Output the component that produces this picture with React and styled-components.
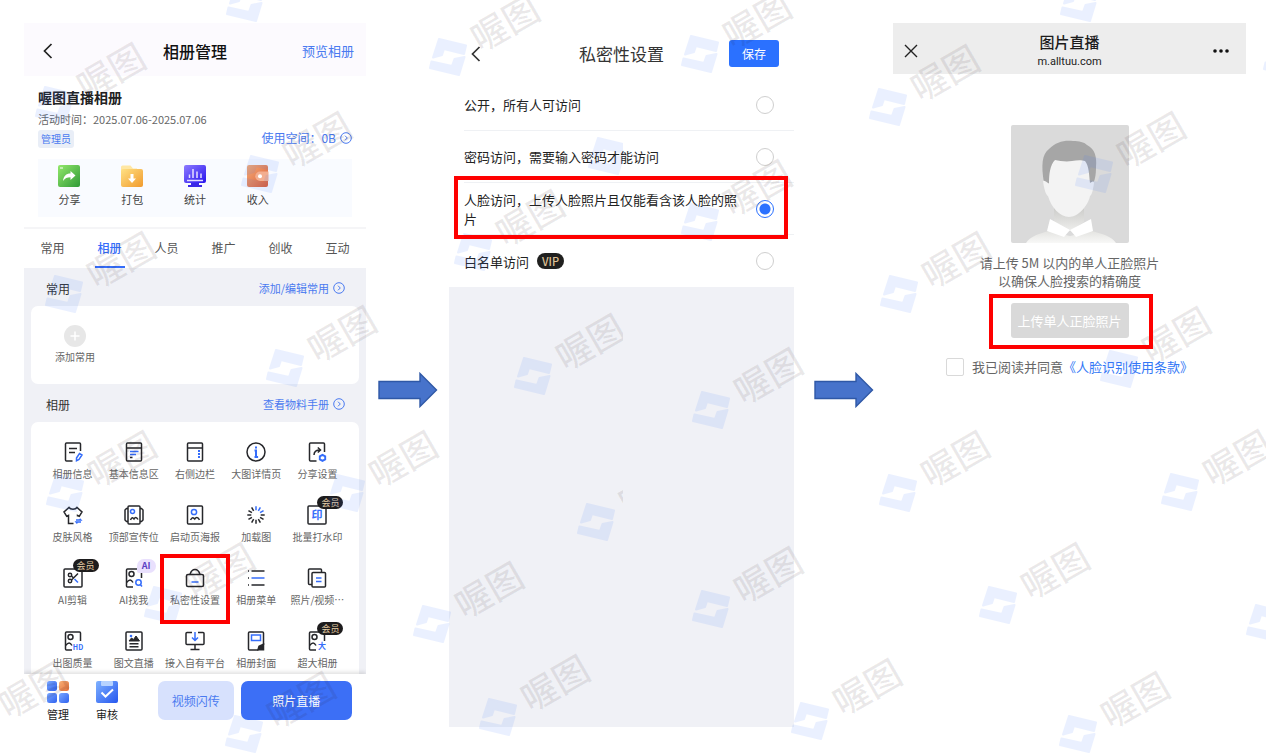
import React, { useState } from "react";
import styled, { createGlobalStyle, css } from "styled-components";

const GlobalStyle = createGlobalStyle`
  * {
    box-sizing: border-box;
  }
  body {
    margin: 0;
    background: #fff;
    color: #222;
    font-family: "Noto Sans CJK SC", "Noto Sans", sans-serif;
    overflow-x: hidden;
  }
  button {
    padding: 0;
    border: 0;
    background: none;
    font: inherit;
    color: inherit;
    cursor: pointer;
  }
  a {
    color: inherit;
    text-decoration: none;
  }
  h1, h2, h3, p {
    margin: 0;
    font-weight: 400;
  }
  svg {
    display: block;
  }
`;

const DARK = "#26272b";
const BLUE = "#356dfa";

/* ---------- icons of the album grid, 24 x 24 ---------- */

const IconLetters = styled.text`
  fill: ${BLUE};
  stroke: none;
  font-size: ${(props) => props.$size || 11}px;
  font-weight: 700;
  text-anchor: middle;
`;

const Picture = () => (
  <>
    <path d="M11 21H5.5a1 1 0 0 1-1-1V4a1 1 0 0 1 1-1h13a1 1 0 0 1 1 1v8" />
    <circle cx="9.5" cy="8" r="2.5" />
    <path d="M4.5 16.5c3-3.5 4.5-3.5 6.5 0" />
  </>
);

const gridIcons = {
  info: (
    <>
      <path d="M11.5 21h-6a1 1 0 0 1-1-1V4a1 1 0 0 1 1-1h13a1 1 0 0 1 1 1v7" />
      <path d="M8 8.5h8M8 12.5h6" />
      <path stroke={BLUE} d="M15.5 18l3-4.5L21 15l-3 4.5-2.5 1.2z" />
    </>
  ),
  basic: (
    <>
      <rect x="4.5" y="3" width="15" height="18" rx="1" />
      <path d="M4.5 8h15M8 17.5h2.5" />
      <path stroke={BLUE} d="M8 11.5h8.5M8 14.5h6" />
    </>
  ),
  sidebar: (
    <>
      <rect x="4.5" y="3" width="15" height="18" rx="1" />
      <path d="M4.5 8h15" />
      <path stroke={BLUE} strokeWidth="2" d="M15 11h2M15 14h2M15 17h2" />
    </>
  ),
  detail: (
    <>
      <circle cx="12" cy="12" r="9" />
      <path stroke={BLUE} strokeWidth="2" d="M10.5 10.5H12v6M10.5 17h3.6M11 7.5h2" />
    </>
  ),
  share: (
    <>
      <path d="M11.5 21h-6a1 1 0 0 1-1-1V4a1 1 0 0 1 1-1h13a1 1 0 0 1 1 1v8" />
      <path d="M9 15c0-3 1.5-5 6-5M12.8 7.5l2.7 2.5-2.7 2.5" />
      <path stroke={BLUE} strokeWidth="1.9" d="M17.5 14.8l2.7 1.5v3.1l-2.7 1.5-2.7-1.5v-3.1z" />
    </>
  ),
  skin: (
    <>
      <path d="M12.5 20.5h-5v-8l-1.8.8L3 9l5-4.5c1.5 2.3 6.5 2.3 8 0L21 9l-2.7 4.3-1.8-.8v1" />
      <path stroke={BLUE} strokeWidth="1.3" d="M15 17h5l-1.3-1.3M20 19h-5l1.3 1.5" />
    </>
  ),
  banner: (
    <>
      <rect x="6" y="3" width="12" height="18" rx="1" />
      <path d="M6 5.5H4.5L3 7v10l1.5 1.5H6M18 5.5h1.5L21 7v10l-1.5 1.5H18" />
      <circle stroke={BLUE} cx="10.5" cy="8.5" r="2" />
      <path d="M8.5 17c1.5-3.5 2.5-2 3.5-1 1-2 2.5-2.5 4 .5" />
    </>
  ),
  poster: (
    <>
      <rect x="4.5" y="3" width="15" height="18" rx="1" />
      <circle stroke={BLUE} cx="11" cy="9" r="2.6" />
      <path d="M7.5 17c2-3.5 3-2 4.2-1 1.2-2 3-2.5 4.8.8" />
    </>
  ),
  loading: (
    <>
      {[...Array(12)].map((_, i) => (
        <path
          key={i}
          stroke={i < 3 ? BLUE : DARK}
          transform={`rotate(${i * 30} 12 12)`}
          d="M12 3.3v4"
        />
      ))}
    </>
  ),
  watermark: (
    <>
      <rect x="3" y="3" width="18" height="18" rx="1" />
      <IconLetters x="12" y="16">印</IconLetters>
    </>
  ),
  clip: (
    <>
      <rect x="3" y="3" width="18" height="18" rx="1" />
      <circle cx="9" cy="9" r="1.7" />
      <circle cx="9" cy="15" r="1.7" />
      <path d="M10.5 14L17 7.5M10.5 10l2 2" />
      <path stroke={BLUE} d="M13.5 13l3.5 3.5" />
    </>
  ),
  find: (
    <>
      <Picture />
      <circle stroke={BLUE} cx="16.5" cy="16.5" r="2.7" />
      <path stroke={BLUE} d="M18.5 18.7l1.5 1.8" />
    </>
  ),
  privacy: (
    <>
      <rect x="3.5" y="8.5" width="17" height="12" rx="1.5" />
      <path d="M7 8.5c1-3.5 2.500-5 5-5s4 1.500 5 5" />
      <path stroke={BLUE} d="M8.5 16h7" />
    </>
  ),
  menu: (
    <>
      <path d="M7.5 5h13M7.5 19h13M4 5h1M4 12h1M4 19h1" />
      <path stroke={BLUE} d="M7.5 12h13" />
    </>
  ),
  photos: (
    <>
      <path d="M7 18.5H4.5a1 1 0 0 1-1-1V4a1 1 0 0 1 1-1h11a1 1 0 0 1 1 1v2" />
      <rect x="7" y="6.5" width="13.5" height="14.5" rx="1" />
      <path stroke={BLUE} d="M11 12h5.5M11 15.5h5.5" />
    </>
  ),
  quality: (
    <>
      <Picture />
      <IconLetters x="17" y="21" $size={7}>HD</IconLetters>
    </>
  ),
  article: (
    <>
      <rect x="4" y="3" width="16" height="18" rx="1" />
      <path fill={DARK} strokeWidth="1" d="M7 12l2.5-3 2 1.5L14 7l3.5 5z" />
      <circle fill={BLUE} stroke="none" cx="9" cy="7" r="1.3" />
      <path d="M7.5 14.7h9M7.5 17.7h9" />
    </>
  ),
  platform: (
    <>
      <path d="M9 3.5H4a1 1 0 0 0-1 1v10a1 1 0 0 0 1 1h16a1 1 0 0 0 1-1v-10a1 1 0 0 0-1-1h-5M12 15.5V20M7.5 20.5h9" />
      <path stroke={BLUE} d="M12 3v8M9 8.5l3 3 3-3" />
    </>
  ),
  cover: (
    <>
      <path d="M14.5 21h-9a1 1 0 0 1-1-1V4a1 1 0 0 1 1-1h13a1 1 0 0 1 1 1v12" />
      <rect stroke={BLUE} x="7.5" y="6" width="9" height="5.5" />
      <path fill={DARK} d="M14 20.8l1-3.6 4.5-2v5.6z" />
    </>
  ),
  huge: (
    <>
      <Picture />
      <IconLetters x="17" y="20" $size={8}>大</IconLetters>
    </>
  ),
};

const gridItems = [
  { icon: "info", label: "相册信息" },
  { icon: "basic", label: "基本信息区" },
  { icon: "sidebar", label: "右侧边栏" },
  { icon: "detail", label: "大图详情页" },
  { icon: "share", label: "分享设置" },
  { icon: "skin", label: "皮肤风格" },
  { icon: "banner", label: "顶部宣传位" },
  { icon: "poster", label: "启动页海报" },
  { icon: "loading", label: "加载图" },
  { icon: "watermark", label: "批量打水印", badge: "会员" },
  { icon: "clip", label: "AI剪辑", badge: "会员" },
  { icon: "find", label: "AI找我", badge: "AI" },
  { icon: "privacy", label: "私密性设置", marked: true },
  { icon: "menu", label: "相册菜单" },
  { icon: "photos", label: "照片/视频…" },
  { icon: "quality", label: "出图质量" },
  { icon: "article", label: "图文直播" },
  { icon: "platform", label: "接入自有平台" },
  { icon: "cover", label: "相册封面" },
  { icon: "huge", label: "超大相册", badge: "会员" },
];

const tabs = ["常用", "相册", "人员", "推广", "创收", "互动"];

/* ---------- coloured icons ---------- */

const Gradient = ({ id, from, to }) => (
  <linearGradient id={id} x1="0" y1="0" x2="1" y2="1">
    <stop offset="0" stopColor={from} />
    <stop offset="1" stopColor={to} />
  </linearGradient>
);

const ShareIcon = () => (
  <svg width="22" height="22" viewBox="0 0 22 22">
    <Gradient id="green" from="#93e86b" to="#2f9a37" />
    <rect width="22" height="22" rx="2" fill="url(#green)" />
    <path d="M2 3h3" stroke="#fff" />
    <path d="M5 16c.5-5 3-7.5 7.5-7.5V6l5 4.5-5 4.5v-2.7c-3.500 0-5.500 1-7.500 3.700z" fill="#fff" />
  </svg>
);

const PackIcon = () => (
  <svg width="22" height="22" viewBox="0 0 22 22">
    <Gradient id="yellow" from="#ffe184" to="#f19a2d" />
    <path d="M0 2A1.5 1.5 0 0 1 1.5.5h8l2.5 3h4V8H0z" fill="#ffe7a3" />
    <rect y="4" width="22" height="18" rx="2" fill="url(#yellow)" />
    <path d="M9.5 9h3v4.5H15L11 18l-4-4.500h2.500z" fill="#fff" />
  </svg>
);

const StatsIcon = () => (
  <svg width="22" height="22" viewBox="0 0 22 22">
    <Gradient id="violet" from="#8d7bff" to="#2713ee" />
    <rect width="22" height="18" rx="2" fill="url(#violet)" />
    <path d="M7 18h8v2h3v2H4v-2h3z" fill="#3b28e8" />
    <path d="M5.500 9.500V13M9 4v9M13 6.500V13M17 8.500V13M3 15.500h16" stroke="#e5e0ff" strokeWidth="1.5" />
  </svg>
);

const IncomeIcon = () => (
  <svg width="22" height="22" viewBox="0 0 22 22">
    <Gradient id="orange" from="#f3ac78" to="#dc5c37" />
    <rect width="21" height="22" rx="2" fill="url(#orange)" />
    <path d="M13 6.500h8.500v9.500H13a4.700 4.700 0 0 1 0-9.500z" fill="#f3ae90" />
    <circle cx="13" cy="11.3" r="2" fill="#fff" />
  </svg>
);

const ManageIcon = () => (
  <svg width="22" height="22" viewBox="0 0 22 22">
    <Gradient id="tile" from="#7aa7ff" to="#2f62ef" />
    <Gradient id="tileHot" from="#f7b078" to="#e5713a" />
    <rect width="10" height="10" rx="2.5" fill="url(#tile)" />
    <rect x="12" width="10" height="10" rx="2.5" fill="url(#tileHot)" />
    <rect y="12" width="10" height="10" rx="2.5" fill="url(#tile)" />
    <rect x="12" y="12" width="10" height="10" rx="2.5" fill="url(#tile)" />
  </svg>
);

const ReviewIcon = () => (
  <svg width="22" height="22" viewBox="0 0 22 22">
    <Gradient id="board" from="#7fb2ff" to="#2657ef" />
    <rect width="22" height="22" rx="2" fill="url(#board)" />
    <rect x="5" width="12" height="5" rx="1" fill="#b7d3ff" />
    <path d="M5.5 11.5l4 4 7.500-7" fill="none" stroke="#fff" strokeWidth="2" />
  </svg>
);

const BackIcon = () => (
  <svg width="10" height="16" viewBox="0 0 10 16">
    <path d="M8.5 1l-7 7 7 7" fill="none" stroke="currentColor" strokeWidth="1.7" />
  </svg>
);

const MoreCircle = () => (
  <svg width="12" height="12" viewBox="0 0 12 12" fill="none" stroke="currentColor">
    <circle cx="6" cy="6" r="5.3" />
    <path d="M5 3.700L7.300 6 5 8.300" />
  </svg>
);

const FlowArrow = () => (
  <Arrow>
    <svg width="60" height="36" viewBox="0 0 60 36">
      <path d="M1 9.5h41v-8L58.5 18 42 34.5v-8H1z" fill="#4773cb" stroke="#2f58a6" strokeWidth="1.4" />
    </svg>
  </Arrow>
);

const Avatar = () => (
  <svg width="118" height="118" viewBox="0 0 118 118">
    <defs>
      <linearGradient id="neck" x1="0" y1="0" x2="0" y2="1">
        <stop offset="0" stopColor="#c8c8c6" />
        <stop offset="1" stopColor="#eeeeec" />
      </linearGradient>
      <linearGradient id="shirt" x1="0" y1="0" x2="0" y2="1">
        <stop offset="0" stopColor="#e4e4e1" />
        <stop offset="1" stopColor="#f8f8f7" />
      </linearGradient>
    </defs>
    <rect width="118" height="118" rx="2" fill="#dadada" />
    <path d="M43 80h30v17l-14 9-16-9z" fill="url(#neck)" />
    <path d="M15 118c5-7 12-9 23-12l21 5 21-5c12 3 20 5 25 12z" fill="url(#shirt)" />
    <path d="M39 94l20 11-6 7-17-6zM80 94l-21 11 6 7 17-6z" fill="#fff" />
    <path d="M33 58C30 40 31 29 38 24c7-7 15-9 24-8 6 0 11 1 14 4 8 4 10 12 9 22 0 8-1 14-4 18z" fill="#a6a6a6" />
    <path d="M38 59c0-10 1-19 6-24 5 1 11 2 17 1 5-1 10-1 13 0 4 5 4 13 5 22 3-2 4-2 4 0-1 7-2 12-4 13-2 10-12 21-21 21S40 82 37 71c-2-1-4-7-5-15 1-1 4 1 6 3z" fill="#f3f3f3" />
  </svg>
);

/* ---------- watermark ---------- */

const stamps = [
  [245, 3], [54, 105], [260, 174], [64, 294], [285, 368], [65, 493], [346, 493],
  [163, 605], [-24, 724], [244, 734], [448, 57], [700, 54], [473, 252], [711, 410],
  [432, 624], [711, 609], [498, 717], [810, 721], [1079, 3], [888, 107], [1094, 174],
  [1282, 58], [899, 294], [1119, 369], [898, 493], [1180, 492], [998, 605],
  [1265, 623], [1078, 734], [700, 222],
];

// these run into the right edge of a narrower layer
const cutStamps = [[607, 156], [533, 376], [596, 522]];

const Stamps = ({ list }) =>
  list.map(([x, y]) => (
    <Stamp key={`${x}-${y}`} $x={x} $y={y}>
      <svg width="40" height="40" viewBox="0 0 40 40">
        <g fill="#3b76ff" stroke="#3b76ff" strokeWidth="2" strokeLinejoin="round" opacity="0.1">
          <path d="M11 2l27 6.5-2 8.500-20-5-2 6-9 2.500z" />
          <path d="M3.500 24.500L24 29l2.500-7 10-2L31 38 2 31z" />
        </g>
      </svg>
      {y > 20 && <StampText>喔图</StampText>}
    </Stamp>
  ));

/* ---------- screens ---------- */

const AlbumScreen = () => {
  const [tab, setTab] = useState("相册");

  return (
    <Album>
      <AlbumHeader>
        <BackButton aria-label="返回"><BackIcon /></BackButton>
        <AlbumTitle>相册管理</AlbumTitle>
        <PreviewLink href="#preview">预览相册</PreviewLink>
      </AlbumHeader>

      <AlbumInfo>
        <AlbumName>喔图直播相册</AlbumName>
        <AlbumDate>活动时间：2025.07.06-2025.07.06</AlbumDate>
        <InfoRow>
          <RoleTag>管理员</RoleTag>
          <SpaceLink href="#space">使用空间：0B <MoreCircle /></SpaceLink>
        </InfoRow>
        <Quick>
          <QuickButton><ShareIcon />分享</QuickButton>
          <QuickButton><PackIcon />打包</QuickButton>
          <QuickButton><StatsIcon />统计</QuickButton>
          <QuickButton><IncomeIcon />收入</QuickButton>
        </Quick>
      </AlbumInfo>

      <Tabs>
        {tabs.map((name) => (
          <Tab key={name} $active={name === tab} onClick={() => setTab(name)}>
            {name}
          </Tab>
        ))}
      </Tabs>

      <AlbumBody>
        <SectionHead>
          <SectionTitle>常用</SectionTitle>
          <SectionLink href="#edit">添加/编辑常用 <MoreCircle /></SectionLink>
        </SectionHead>
        <AddCard>
          <AddButton>
            <svg width="22" height="22" viewBox="0 0 22 22">
              <circle cx="11" cy="11" r="11" fill="#e7e7e7" />
              <path d="M11 6.500v9M6.500 11h9" stroke="#fff" strokeWidth="1.5" />
            </svg>
            添加常用
          </AddButton>
        </AddCard>
        <SectionHead>
          <SectionTitle>相册</SectionTitle>
          <SectionLink href="#manual">查看物料手册 <MoreCircle /></SectionLink>
        </SectionHead>
        <GridCard>
          {gridItems.map(({ icon, label, badge, marked }) => (
            <GridButton key={label}>
              <IconBox>
                <GridSvg viewBox="0 0 24 24">{gridIcons[icon]}</GridSvg>
                {badge === "会员" && <MemberBadge>会员</MemberBadge>}
                {badge === "AI" && <AiBadge>AI</AiBadge>}
              </IconBox>
              {label}
              {marked && <RedFrame $inset="-12px -4px -16px" />}
            </GridButton>
          ))}
        </GridCard>
      </AlbumBody>

      <AlbumFooter>
        <FooterNav>
          <FooterItem><ManageIcon />管理</FooterItem>
          <FooterItem><ReviewIcon />审核</FooterItem>
        </FooterNav>
        <FlashButton>视频闪传</FlashButton>
        <LiveButton>照片直播</LiveButton>
      </AlbumFooter>
    </Album>
  );
};

const PrivacyScreen = () => {
  const [access, setAccess] = useState("face");

  const radio = (value) => (
    <Radio
      id={value}
      type="radio"
      name="access"
      checked={access === value}
      onChange={() => setAccess(value)}
    />
  );

  return (
    <Privacy>
      <PrivacyHeader>
        <BackButton aria-label="返回"><BackIcon /></BackButton>
        <PrivacyTitle>私密性设置</PrivacyTitle>
        <SaveButton>保存</SaveButton>
      </PrivacyHeader>
      <Options>
        <Option>
          <label htmlFor="public">公开，所有人可访问</label>
          {radio("public")}
        </Option>
        <Option>
          <label htmlFor="password">密码访问，需要输入密码才能访问</label>
          {radio("password")}
        </Option>
        <Option>
          <label htmlFor="face">
            人脸访问，上传人脸照片且仅能看含该人脸的照
            <br />片
          </label>
          {radio("face")}
          <RedFrame $inset="-7px 6px -5px -10px" />
        </Option>
        <Option>
          <VipLabel htmlFor="whitelist">
            白名单访问<VipBadge>VIP</VipBadge>
          </VipLabel>
          {radio("whitelist")}
        </Option>
      </Options>
    </Privacy>
  );
};

const UploadScreen = () => {
  const [agreed, setAgreed] = useState(false);

  return (
    <section>
      <UploadHeader>
        <button aria-label="关闭">
          <svg width="14" height="14" viewBox="0 0 14 14">
            <path d="M1 1l12 12M13 1L1 13" stroke="#222" strokeWidth="1.4" />
          </svg>
        </button>
        <UploadHeading>
          <UploadTitle>图片直播</UploadTitle>
          <UploadSite>m.alltuu.com</UploadSite>
        </UploadHeading>
        <MoreButton aria-label="更多">
          <svg width="16" height="4" viewBox="0 0 16 4" fill="#111">
            <circle cx="2" cy="2" r="1.8" />
            <circle cx="8" cy="2" r="1.8" />
            <circle cx="14" cy="2" r="1.8" />
          </svg>
        </MoreButton>
      </UploadHeader>
      <UploadBody>
        <Avatar />
        <UploadHint>
          请上传 5M 以内的单人正脸照片
          <br />
          以确保人脸搜索的精确度
        </UploadHint>
        <UploadAction>
          <UploadButton>上传单人正脸照片</UploadButton>
          <RedFrame $inset="-9px -24px -11px -22px" />
        </UploadAction>
        <Agreement>
          <AgreeBox
            id="agree"
            type="checkbox"
            checked={agreed}
            onChange={() => setAgreed(!agreed)}
          />
          <label htmlFor="agree">我已阅读并同意</label>
          <TermsLink href="#terms">《人脸识别使用条款》</TermsLink>
        </Agreement>
      </UploadBody>
    </section>
  );
};

const App = () => (
  <>
    <GlobalStyle />
    <Page>
      <AlbumScreen />
      <FlowArrow />
      <PrivacyScreen />
      <FlowArrow />
      <UploadScreen />
      <StampLayer aria-hidden="true"><Stamps list={stamps} /></StampLayer>
      <CutStampLayer aria-hidden="true"><Stamps list={cutStamps} /></CutStampLayer>
    </Page>
  </>
);

const Page = styled.main`
  position: relative;
  display: grid;
  grid-template-columns: 342fr 83px 345fr 99px 353fr;
  min-height: 100vh;
  padding: 23px 20px 26px 24px;
  overflow: hidden;
`;

const Arrow = styled.div`
  display: flex;
  justify-content: center;
  align-items: flex-start;
  padding-top: 349px;
`;

const StampLayer = styled.div`
  position: absolute;
  inset: 0;
  z-index: 1;
  overflow: hidden;
  pointer-events: none;
`;
const CutStampLayer = styled(StampLayer)`
  width: 623px;
`;
const Stamp = styled.div`
  position: absolute;
  left: ${(props) => props.$x - 20}px;
  top: ${(props) => props.$y - 20}px;
`;
const StampText = styled.span`
  position: absolute;
  left: 40px;
  top: -34px;
  color: rgba(40, 20, 30, 0.09);
  font-size: 36px;
  font-weight: 500;
  line-height: 37px;
  white-space: nowrap;
  transform: rotate(-30deg);
`;

const RedFrame = styled.span`
  position: absolute;
  inset: ${(props) => props.$inset};
  z-index: 2;
  border: 4px solid #fe0000;
  pointer-events: none;
`;

const BackButton = styled.button`
  justify-self: start;
  margin-left: 7px;
`;

const Album = styled.section`
  align-self: start;
`;
const AlbumHeader = styled.header`
  display: grid;
  grid-template-columns: 1fr auto 1fr;
  align-items: center;
  height: 53px;
  padding: 2px 12px 0;
  background: #fcfafe;
`;
const AlbumTitle = styled.h1`
  color: #111;
  font-size: 16px;
  font-weight: 500;
`;
const PreviewLink = styled.a`
  justify-self: end;
  color: #4a7af0;
  font-size: 13px;
`;
const AlbumInfo = styled.div`
  padding: 11px 14px 10px;
`;
const AlbumName = styled.h2`
  font-size: 14px;
  font-weight: 700;
  line-height: 20px;
`;
const AlbumDate = styled.p`
  margin-top: 3px;
  color: #666;
  font-size: 11px;
  line-height: 18px;
`;
const InfoRow = styled.div`
  display: flex;
  align-items: flex-start;
  justify-content: space-between;
  margin-top: 2px;
`;
const RoleTag = styled.span`
  padding: 0 3px;
  border-radius: 3px;
  background: #e9eef7;
  color: #4a7af0;
  font-size: 10px;
  line-height: 18px;
`;
const linkRow = css`
  display: flex;
  align-items: center;
  gap: 4px;
  color: #4a7af0;
`;
const SpaceLink = styled.a`
  ${linkRow}
  font-size: 12px;
  line-height: 15px;
`;
const Quick = styled.div`
  display: grid;
  grid-template-columns: repeat(5, 1fr);
  margin-top: 11px;
  padding: 6px 0 10px;
  background: #f9fbff;
`;
const QuickButton = styled.button`
  display: flex;
  flex-direction: column;
  align-items: center;
  gap: 4px;
  color: #444;
  font-size: 11px;
  line-height: 16px;
`;
const Tabs = styled.nav`
  display: grid;
  grid-template-columns: repeat(6, 1fr);
  height: 41px;
  border-top: 2px solid #f5f5f7;
`;
const Tab = styled.button`
  display: flex;
  flex-direction: column;
  align-items: center;
  color: ${(props) => (props.$active ? "#356dfa" : "#555")};
  font-size: 12px;
  font-weight: ${(props) => (props.$active ? 500 : 400)};
  line-height: 37px;

  &::after {
    content: "";
    width: 30px;
    height: 2px;
    background: ${(props) => (props.$active ? "#356dfa" : "transparent")};
  }
`;
const AlbumBody = styled.div`
  padding: 0 7px;
  background: #f0f1f6;
`;
const SectionHead = styled.div`
  display: flex;
  align-items: center;
  justify-content: space-between;
  height: 38px;
  padding: 2px 14px 0 15px;
`;
const SectionTitle = styled.h3`
  color: #333;
  font-size: 12px;
`;
const SectionLink = styled.a`
  ${linkRow}
  font-size: 11px;
`;
const AddCard = styled.div`
  display: flex;
  padding: 19px 24px;
  border-radius: 7px;
  background: #fff;
`;
const AddButton = styled.button`
  display: flex;
  flex-direction: column;
  align-items: center;
  gap: 2px;
  color: #666;
  font-size: 10px;
  line-height: 16px;
`;
const GridCard = styled.div`
  display: grid;
  grid-template-columns: repeat(5, minmax(0, 1fr));
  row-gap: 21px;
  padding: 18px 11px 3px;
  border-radius: 7px 7px 0 0;
  background: #fff;
`;
const GridButton = styled.button`
  position: relative;
  display: flex;
  flex-direction: column;
  align-items: center;
  gap: 2px;
  color: #666;
  font-size: 10px;
  line-height: 16px;
  white-space: nowrap;
`;
const IconBox = styled.span`
  position: relative;
`;
const GridSvg = styled.svg`
  width: 24px;
  height: 24px;
  fill: none;
  stroke: ${DARK};
  stroke-width: 1.5px;
`;
const MemberBadge = styled.span`
  position: absolute;
  left: 12px;
  top: -7px;
  padding: 0 4px;
  border-radius: 7px;
  background: #1d1c1d;
  color: #e8cfa6;
  font-size: 9px;
  line-height: 13px;
`;
const AiBadge = styled.span`
  position: absolute;
  left: 15px;
  top: -7px;
  padding: 0 5px;
  border-radius: 7px 7px 7px 2px;
  background: #e9e0fd;
  color: #5b3fc4;
  font-size: 9px;
  font-weight: 700;
  line-height: 14px;
`;
const AlbumFooter = styled.footer`
  position: relative;
  display: flex;
  gap: 7px;
  padding: 7px 14px 0 23px;
  background: #fff;
  box-shadow: 0 -2px 4px rgba(0, 0, 0, 0.12);
  clip-path: inset(-6px 0 0 0);
`;
const FooterNav = styled.nav`
  display: flex;
  gap: 27px;
  margin-right: 33px;
`;
const FooterItem = styled.button`
  display: flex;
  flex-direction: column;
  align-items: center;
  gap: 2px;
  width: 22px;
  font-size: 11px;
  line-height: 18px;
  white-space: nowrap;
`;
const FlashButton = styled.button`
  flex: 76;
  height: 39px;
  border-radius: 7px;
  background: #d7e1fd;
  color: #4a7af0;
  font-size: 12px;
`;
const LiveButton = styled(FlashButton)`
  flex: 112;
  background: #3c6ff6;
  color: #fff;
`;

const Privacy = styled.section`
  background: #f0f1f6;
`;
const PrivacyHeader = styled.header`
  display: grid;
  grid-template-columns: 1fr auto 1fr;
  align-items: center;
  height: 56px;
  padding: 5px 15px 0;
  background: #fff;
  color: #333;
`;
const PrivacyTitle = styled.h1`
  font-size: 17px;
`;
const SaveButton = styled.button`
  justify-self: end;
  width: 50px;
  height: 27px;
  border-radius: 3px;
  background: #2b71ff;
  color: #fff;
  font-size: 12px;
`;
const Options = styled.div`
  padding-left: 15px;
  background: #fff;
`;
const Option = styled.div`
  position: relative;
  display: flex;
  align-items: center;
  justify-content: space-between;
  min-height: 52px;
  padding-right: 20px;
  border-bottom: 1px solid #eff1f4;
  font-size: 13px;
  line-height: 19px;

  &:last-child {
    border-bottom: 0;
  }
`;
const Radio = styled.input`
  flex: none;
  appearance: none;
  width: 18px;
  height: 18px;
  margin: 0;
  border: 1px solid #cfcfcf;
  border-radius: 50%;
  background: #fff;

  &:checked {
    border-color: #2b71ff;
    background: radial-gradient(circle, #2b71ff 5px, #fff 6px);
  }
`;
const VipLabel = styled.label`
  display: flex;
  align-items: center;
  gap: 8px;
`;
const VipBadge = styled.span`
  padding: 0 5px;
  border-radius: 8px;
  background: #20201f;
  color: #dfc096;
  font-size: 11px;
  font-weight: 500;
  line-height: 16px;
`;

const UploadHeader = styled.header`
  display: grid;
  grid-template-columns: 1fr auto 1fr;
  align-items: center;
  justify-items: start;
  height: 51px;
  padding: 5px 11px 0;
  background: #ededed;
`;
const UploadHeading = styled.div`
  text-align: center;
`;
const MoreButton = styled.button`
  justify-self: end;
  margin-right: 6px;
`;
const UploadTitle = styled.h1`
  color: #1c1c1c;
  font-size: 15px;
  font-weight: 500;
  line-height: 22px;
`;
const UploadSite = styled.p`
  color: #222;
  font-family: Roboto, sans-serif;
  font-size: 11px;
  line-height: 18px;
`;
const UploadBody = styled.div`
  display: flex;
  flex-direction: column;
  align-items: center;
  padding-top: 51px;
  color: #666;
  font-size: 13px;
`;
const UploadHint = styled.p`
  margin-top: 11px;
  line-height: 18px;
  text-align: center;
`;
const UploadAction = styled.div`
  position: relative;
  margin-top: 13px;
`;
const UploadButton = styled.button`
  width: 118px;
  height: 35px;
  border-radius: 3px;
  background: #d9d9d9;
  color: #fff;
`;
const Agreement = styled.div`
  display: flex;
  align-items: center;
  margin-top: 19px;
`;
const AgreeBox = styled.input`
  appearance: none;
  width: 18px;
  height: 18px;
  margin: 0 8px 0 0;
  border: 1px solid #d9d9d9;
  border-radius: 2px;
  background: #fff;

  &:checked {
    background: #2b71ff;
  }
`;
const TermsLink = styled.a`
  color: #3478f6;
`;

export default App;
